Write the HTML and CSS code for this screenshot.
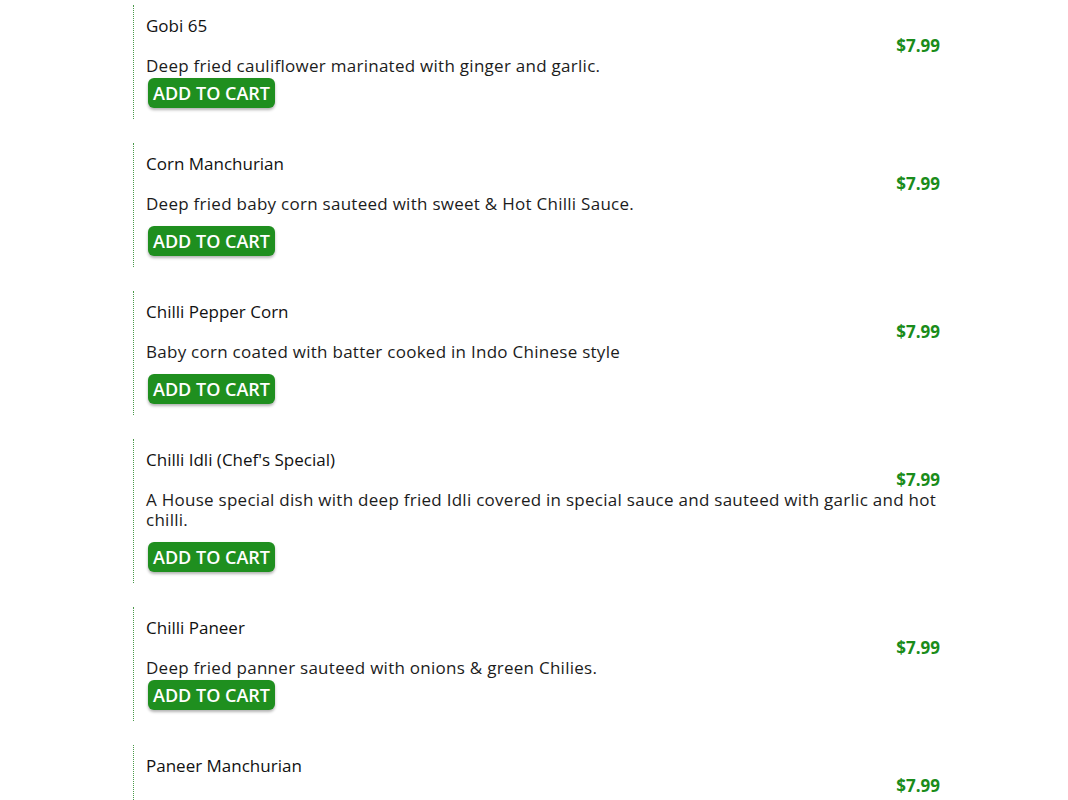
FILE: index.html
```html
<!DOCTYPE html>
<html>
<head>
<meta charset="utf-8">
<link rel="stylesheet" href="styles.css">
</head>
<body>
<div class="menu">
  <div class="item">
    <div class="title">Gobi 65</div>
    <div class="price">$7.99</div>
    <div class="desc">Deep fried cauliflower marinated with ginger and garlic.</div>
    <button class="cart">ADD TO CART</button>
  </div>
  <div class="item">
    <div class="title">Corn Manchurian</div>
    <div class="price">$7.99</div>
    <p class="desc spaced">Deep fried baby corn sauteed with sweet &amp; Hot Chilli Sauce.</p>
    <button class="cart">ADD TO CART</button>
  </div>
  <div class="item">
    <div class="title">Chilli Pepper Corn</div>
    <div class="price">$7.99</div>
    <p class="desc spaced">Baby corn coated with batter cooked in Indo Chinese style</p>
    <button class="cart">ADD TO CART</button>
  </div>
  <div class="item">
    <div class="title">Chilli Idli (Chef's Special)</div>
    <div class="price">$7.99</div>
    <p class="desc spaced">A House special dish with deep fried Idli covered in special sauce and sauteed with garlic and hot chilli.</p>
    <button class="cart">ADD TO CART</button>
  </div>
  <div class="item">
    <div class="title">Chilli Paneer</div>
    <div class="price">$7.99</div>
    <div class="desc">Deep fried panner sauteed with onions &amp; green Chilies.</div>
    <button class="cart">ADD TO CART</button>
  </div>
  <div class="item last">
    <div class="title">Paneer Manchurian</div>
    <div class="price">$7.99</div>
  </div>
</div>
</body>
</html>
```
FILE: styles.css
```css
html, body {
  margin: 0;
  padding: 0;
  background: #ffffff;
}
body {
  font-family: "Open Sans", "Noto Sans", sans-serif;
  color: #151515;
  height: 800px;
  overflow: hidden;
}
.menu {
  width: 807px;
  margin-left: 133px;
  padding-top: 5px;
}
.item {
  border-left: 1px dotted #4a9a4a;
  padding: 11px 0 11px 12px;
  margin-bottom: 24px;
}
.item.last {
  padding-bottom: 40px;
}
.title {
  font-size: 17px;
  line-height: 20px;
  font-weight: 500;
  color: #111;
}
.price {
  text-align: right;
  font-size: 17px;
  line-height: 20px;
  font-weight: 700;
  color: #1a8c1a;
}
.desc {
  font-size: 17px;
  letter-spacing: 0.27px;
  line-height: 20px;
  color: #1c1c1c;
  margin: 0;
}
.desc.spaced {
  margin-bottom: 12px;
}
.cart {
  display: block;
  margin: 2px 0 0 2px;
  height: 30px;
  padding: 0 5px;
  border: none;
  border-radius: 6px;
  background: #1f8f1f;
  color: #fff;
  font-family: "Open Sans", "Noto Sans", sans-serif;
  font-size: 18px;
  font-weight: 600;
  box-shadow: 0 2px 3px rgba(0,0,0,0.3);
  cursor: pointer;
}
```
